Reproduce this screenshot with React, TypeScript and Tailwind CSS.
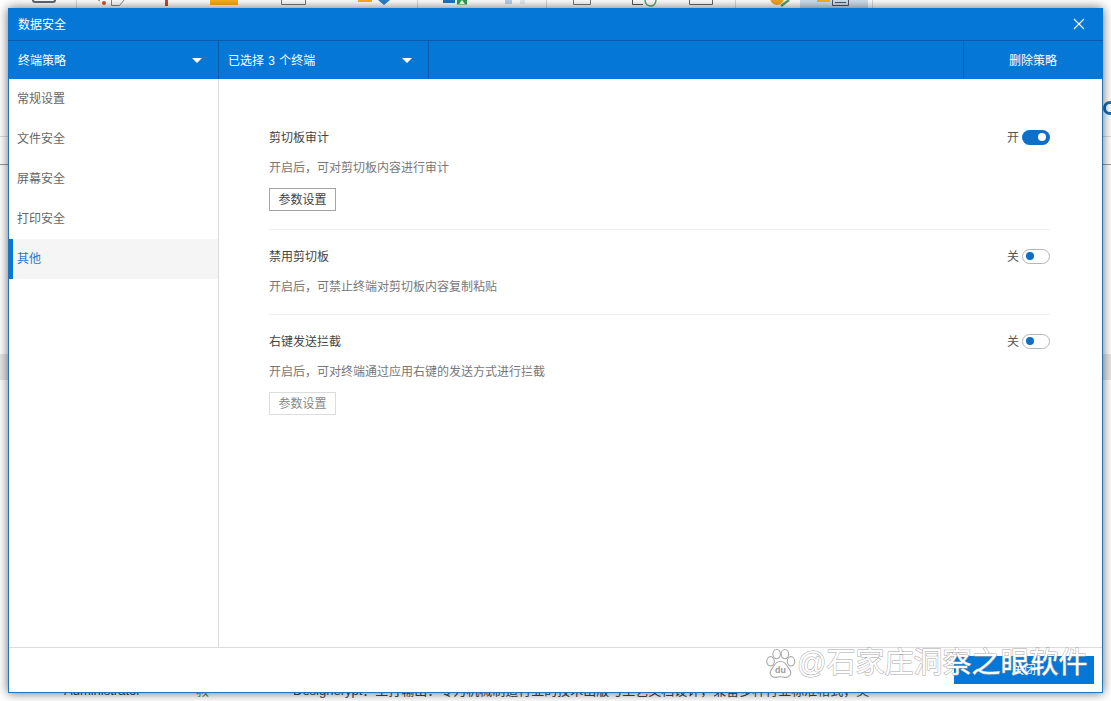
const font = '[font-family:"Liberation_Sans","Noto_Sans_CJK_SC",sans-serif]'

const navItems = ['常规设置', '文件安全', '屏幕安全', '打印安全', '其他']

function ToolbarIcons() {
  return (
    <svg className="block" width="1111" height="24" viewBox="0 0 1111 24">
      <rect x="33" y="-6" width="22" height="8" rx="2" fill="none" stroke="#5f6773" strokeWidth="2" />
      <path d="M76.5 0V24M417.5 0V24M546.5 0V24M735.5 0V24M872.5 0V24" stroke="#d9d9d9" />
      <circle cx="104" cy="3" r="2" fill="#d5532b" />
      <path d="M98 0l2 1M111.5 5.5H119.5L124 0M111.5 5.5V0" stroke="#888" fill="none" />
      <rect x="165" y="0" width="3" height="6" fill="#d24a1e" />
      <rect x="210" y="0" width="28" height="5" fill="#fbb117" />
      <path d="M281.5 0V4.5H305.5V0" stroke="#777" fill="none" />
      <rect x="358" y="0" width="14" height="2" fill="#fbb117" />
      <path d="M378 0H390L384 5Z" fill="#2a7fd0" />
      <rect x="443" y="0" width="12" height="3" fill="#1c75c8" />
      <path d="M457 4.5H467V0H457ZM459 4L462 0L465 4Z" fill="#2f9e55" />
      <rect x="505" y="0" width="7" height="4" fill="#b8d2ea" />
      <rect x="520" y="0" width="5" height="4" fill="#e4ecf3" />
      <path d="M573.5 0V4.5H590.5V0" stroke="#777" fill="none" />
      <path d="M632.5 0V4.5H643" stroke="#555" fill="none" />
      <path d="M645 0C645 4 648 6 651 6C654 6 656 3 656 0" stroke="#5aa469" fill="none" strokeWidth="1.5" />
      <path d="M689.5 0V4.5H712.5V0" stroke="#666" fill="none" />
      <circle cx="777" cy="-2" r="7" fill="#f5a623" />
      <path d="M781 6L789 0" stroke="#5aa469" strokeWidth="2.5" />
      <rect x="800" y="0" width="68" height="24" fill="#cfe0f0" />
      <rect x="817" y="0" width="13" height="2" fill="#fbb117" />
      <path d="M832.5 0V5.5H848.5V0M835 2.5H846" stroke="#556" fill="none" />
    </svg>
  )
}

function Toggle({ on }: { on: boolean }) {
  return (
    <div className="flex items-center gap-[3px]">
      <span className="pt-[2px] text-xs leading-5 text-[#555]">{on ? '开' : '关'}</span>
      <div
        className={
          on
            ? 'flex h-[15px] w-7 items-center justify-end rounded-full bg-[#0f6fc6] pr-[4px]'
            : 'flex h-[15px] w-7 items-center justify-start rounded-full border border-[#b5b5b5] bg-white pl-[3px]'
        }
      >
        <span className={on ? 'h-2 w-2 rounded-full bg-white' : 'h-2 w-2 rounded-full bg-[#0f6fc6]'} />
      </div>
    </div>
  )
}

function Caret() {
  return (
    <svg width="10" height="5" viewBox="0 0 10 5">
      <path d="M0 0H10L5.6 4.6Q5 5 4.4 4.6Z" fill="#fff" />
    </svg>
  )
}

type SectionProps = {
  title: string
  desc: string
  on: boolean
  button?: 'normal' | 'disabled'
  className: string
}

function Section({ title, desc, on, button, className }: SectionProps) {
  return (
    <section className={className}>
      <div className="flex h-5 items-center justify-between">
        <h3 className="pt-[2px] text-xs font-normal leading-5 text-[#444]">{title}</h3>
        <Toggle on={on} />
      </div>
      <p className="mt-[11px] text-xs leading-5 text-[#777]">{desc}</p>
      {button && (
        <button
          className={
            button === 'normal'
              ? 'mt-[10px] block h-[23px] w-[67px] border border-[#a3a3a3] bg-white text-xs text-[#444]'
              : 'mt-[10px] block h-[23px] w-[67px] border border-[#dcdcdc] bg-white text-xs text-[#888]'
          }
        >
          参数设置
        </button>
      )}
    </section>
  )
}

export default function App() {
  return (
    <div className={`relative h-[701px] w-[1111px] overflow-hidden bg-white ${font}`}>
      {/* app behind the dialog */}
      <div className="flex h-full flex-col">
        <ToolbarIcons />
        <div className="flex h-[113px] items-start justify-end border-b border-[#dddddd]">
          <span className="mt-[77px] h-[14px] w-[14px] translate-x-[6px] rounded-full border-[3px] border-[#1b6fb8]" />
        </div>
        <div className="h-[28px] border-b border-[#9a9a9a]" />
        <div className="h-[189px]" />
        <div className="h-[26px] bg-[#e6e6e6]" />
        <div className="flex-1" />
        <div className="flex h-[20px] items-center text-[13px] text-[#444]">
          <span className="ml-[64px] w-[132px]">Administrator</span>
          <span className="w-[97px] text-[#2f9e55]">救</span>
          <span>Designerypt：主打输出：专为机械制造行业的技术出版与工艺文档设计，兼备多种行业标准格式，美</span>
        </div>
      </div>

      {/* dialog */}
      <div className="absolute left-2 top-2 flex h-[685px] w-[1095px] flex-col border-x border-b border-[#2a74b5] bg-white shadow-[0_0_10px_rgba(0,0,0,0.6)]">
        <header className="-mx-px flex h-[32px] items-center justify-between bg-[#0477d7] pl-[10px] pr-[18px] text-xs text-white">
          <span className="pt-[2px]">数据安全</span>
          <svg width="12" height="12" viewBox="0 0 12 12">
            <path d="M1 1L11 11M11 1L1 11" stroke="#fff" strokeWidth="1.1" />
          </svg>
        </header>
        <div className="-mx-px flex h-[39px] border-t border-[#0a5caa] bg-[#0477d7] text-xs text-white">
          <div className="flex w-[211px] items-center justify-between border-r border-[#0a5caa] pl-[10px] pr-[16px]">
            <span className="pt-[2px]">终端策略</span>
            <Caret />
          </div>
          <div className="flex w-[210px] items-center justify-between border-r border-[#0a5caa] pl-[9px] pr-[16px]">
            <span className="pt-[2px] [word-spacing:1px]">已选择 3 个终端</span>
            <Caret />
          </div>
          <div className="flex-1" />
          <div className="flex w-[140px] items-center justify-center border-l border-[#0a5caa] pr-[1px] pt-[2px]">删除策略</div>
        </div>

        <div className="flex min-h-0 flex-1">
          <nav className="w-[210px] shrink-0 border-r border-[#dcdcdc]">
            {navItems.map((item) => (
              <div
                key={item}
                className={
                  item === '其他'
                    ? 'flex h-10 items-center border-l-4 border-[#0477d7] bg-[#f5f5f5] pl-1 text-xs text-[#2a78c4]'
                    : 'flex h-10 items-center pl-2 text-xs text-[#666]'
                }
              >
                {item}
              </div>
            ))}
          </nav>
          <main className="flex-1 pl-[50px] pr-[52px]">
            <Section
              className="border-b border-[#eeeeee] pb-[18px] pt-[48px]"
              title="剪切板审计"
              desc="开启后，可对剪切板内容进行审计"
              on
              button="normal"
            />
            <Section
              className="border-b border-[#eeeeee] pb-[17px] pt-[16px]"
              title="禁用剪切板"
              desc="开启后，可禁止终端对剪切板内容复制粘贴"
              on={false}
            />
            <Section
              className="pt-[16px]"
              title="右键发送拦截"
              desc="开启后，可对终端通过应用右键的发送方式进行拦截"
              on={false}
              button="disabled"
            />
          </main>
        </div>

        <footer className="flex h-[45px] shrink-0 items-start justify-end border-t border-[#dcdcdc] pr-2 pt-2">
          <button className="h-7 w-[140px] bg-[#0477d7] text-xs text-white">关闭</button>
        </footer>
      </div>

      {/* watermark */}
      <div className="absolute left-[765px] top-[645px] flex items-center gap-[1px]">
        <svg width="31" height="31" viewBox="1 1 28 28">
          <g fill="#fff" stroke="#a8a8a8" strokeWidth="1">
            <ellipse cx="6" cy="13" rx="3.4" ry="4.2" />
            <ellipse cx="11.5" cy="6.5" rx="3.4" ry="4.2" />
            <ellipse cx="19" cy="6.5" rx="3.4" ry="4.2" />
            <ellipse cx="24.5" cy="13" rx="3.4" ry="4.2" />
            <path d="M15 13C10 13 9 18 6.5 21C4 25 8 28 11 27.5C13 27 17 27 19 27.5C22 28 26 25 23.5 21C21 18 20 13 15 13Z" />
          </g>
          <text x="15" y="24" textAnchor="middle" fontSize="8" fontWeight="700" fill="#999" fontFamily="Liberation Sans">du</text>
        </svg>
        <span className="text-[29px] leading-9 tracking-[0px] text-white [-webkit-text-stroke:1px_#a8a8a8] [paint-order:stroke_fill]">
          @石家庄洞察之眼软件
        </span>
      </div>
    </div>
  )
}
